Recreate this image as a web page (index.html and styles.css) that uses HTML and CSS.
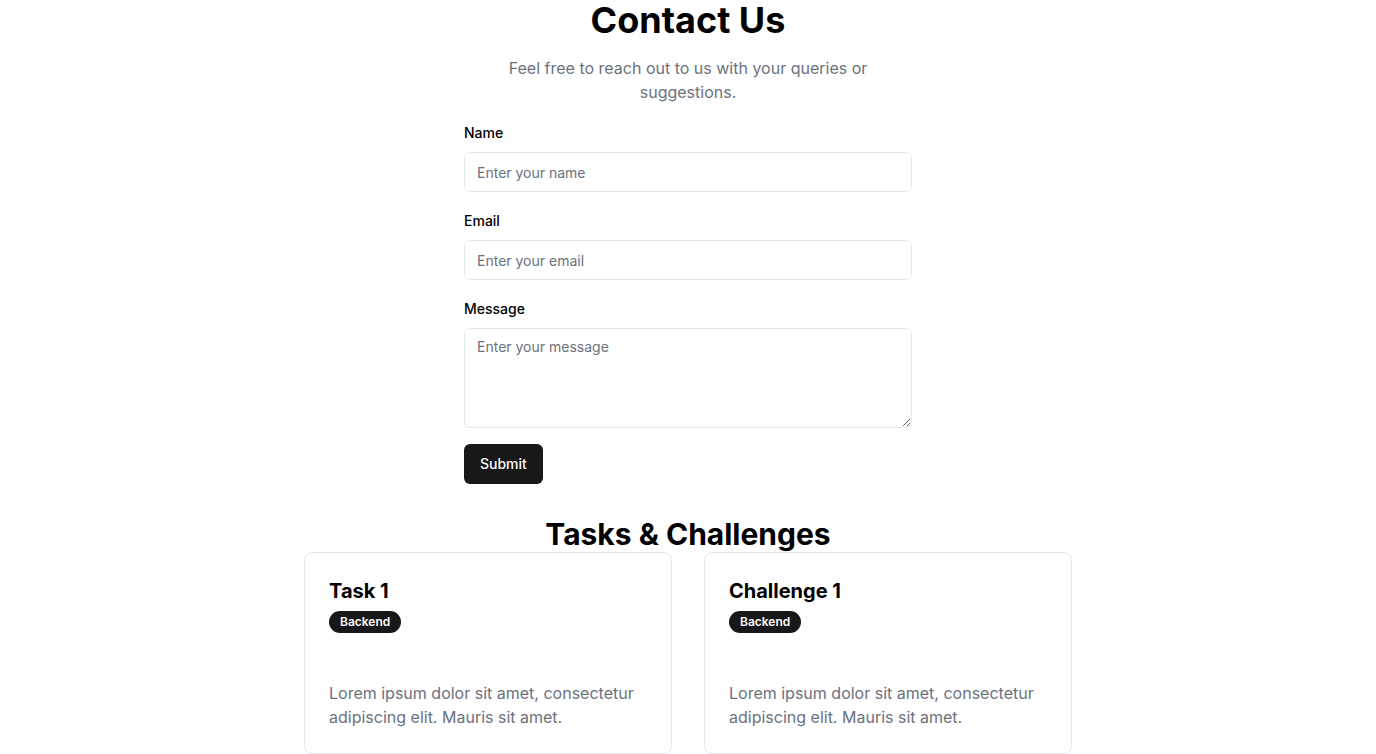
FILE: index.html
```html
<!DOCTYPE html>
<html lang="en">
<head>
<meta charset="utf-8">
<title>Contact Us</title>
<link rel="stylesheet" href="styles.css">
</head>
<body>
<main class="page">
  <section class="contact">
    <h1 class="title">Contact Us</h1>
    <p class="subtitle">Feel free to reach out to us with your queries or suggestions.</p>
    <form class="form">
      <div class="field">
        <label class="label" for="name">Name</label>
        <input class="input" id="name" type="text" placeholder="Enter your name">
      </div>
      <div class="field">
        <label class="label" for="email">Email</label>
        <input class="input" id="email" type="email" placeholder="Enter your email">
      </div>
      <div class="field">
        <label class="label" for="message">Message</label>
        <textarea class="textarea" id="message" placeholder="Enter your message"></textarea>
      </div>
      <div class="actions">
        <button class="button" type="button">Submit</button>
      </div>
    </form>
  </section>
  <section class="tasks">
    <h2 class="tasks-title">Tasks &amp; Challenges</h2>
    <div class="grid">
      <div class="card">
        <h3 class="card-title">Task 1</h3>
        <div class="badge-row"><span class="badge">Backend</span></div>
        <p class="card-text">Lorem ipsum dolor sit amet, consectetur adipiscing elit. Mauris sit amet.</p>
      </div>
      <div class="card">
        <h3 class="card-title">Challenge 1</h3>
        <div class="badge-row"><span class="badge">Backend</span></div>
        <p class="card-text">Lorem ipsum dolor sit amet, consectetur adipiscing elit. Mauris sit amet.</p>
      </div>
    </div>
  </section>
</main>
</body>
</html>
```
FILE: styles.css
```css
* { box-sizing: border-box; }
html, body { margin: 0; padding: 0; background: #ffffff; }
body {
  font-family: Inter, "Noto Sans", "Liberation Sans", sans-serif;
  color: #09090b;
}
.page {
  display: flex;
  flex-direction: column;
  align-items: center;
}
.contact {
  width: 448px;
  display: flex;
  flex-direction: column;
}
.title {
  margin: 0;
  font-size: 36px;
  line-height: 40px;
  font-weight: 700;
  text-align: center;
  color: #000;
}
.subtitle {
  margin: 16px 0 0;
  font-size: 16px;
  line-height: 24px;
  color: #6b7280;
  text-align: center;
}
.form {
  margin-top: 16px;
  display: flex;
  flex-direction: column;
  gap: 16px;
}
.field {
  display: flex;
  flex-direction: column;
  gap: 7px;
}
.label {
  padding-top: 1px;
  font-size: 14px;
  line-height: 24px;
  font-weight: 500;
  color: #000;
}
.input, .textarea {
  width: 100%;
  border: 1px solid #e5e7eb;
  border-radius: 6px;
  font-family: inherit;
  font-size: 14px;
  color: #09090b;
  background: #fff;
  outline: none;
}
.input {
  height: 40px;
  padding: 0 12px;
}
.textarea {
  height: 100px;
  padding: 8px 12px;
  line-height: 20px;
  resize: vertical;
  display: block;
}
.input::placeholder, .textarea::placeholder { color: #6b7280; }
.actions { display: flex; }
.button {
  height: 40px;
  padding: 0 16px 1px;
  border: none;
  border-radius: 6px;
  background: #18181b;
  color: #fafafa;
  font-family: inherit;
  font-size: 14px;
  font-weight: 500;
}
.tasks {
  margin-top: 32px;
  width: 768px;
  display: flex;
  flex-direction: column;
}
.tasks-title {
  margin: 0;
  font-size: 30px;
  line-height: 36px;
  font-weight: 700;
  text-align: center;
  color: #000;
}
.grid {
  display: grid;
  grid-template-columns: 1fr 1fr;
  gap: 32px;
}
.card {
  border: 1px solid #e5e7eb;
  border-radius: 8px;
  padding: 24px;
  background: #fff;
}
.card-title {
  margin: 0;
  font-size: 20px;
  line-height: 28px;
  font-weight: 700;
  color: #000;
}
.badge-row { margin-top: 6px; display: flex; }
.badge {
  display: inline-flex;
  align-items: center;
  height: 22px;
  padding: 0 11px 1px;
  border-radius: 9999px;
  background: #18181b;
  color: #fafafa;
  font-size: 12px;
  font-weight: 600;
}
.card-text {
  margin: 48px 0 0;
  font-size: 16px;
  line-height: 24px;
  color: #6b7280;
}
```
